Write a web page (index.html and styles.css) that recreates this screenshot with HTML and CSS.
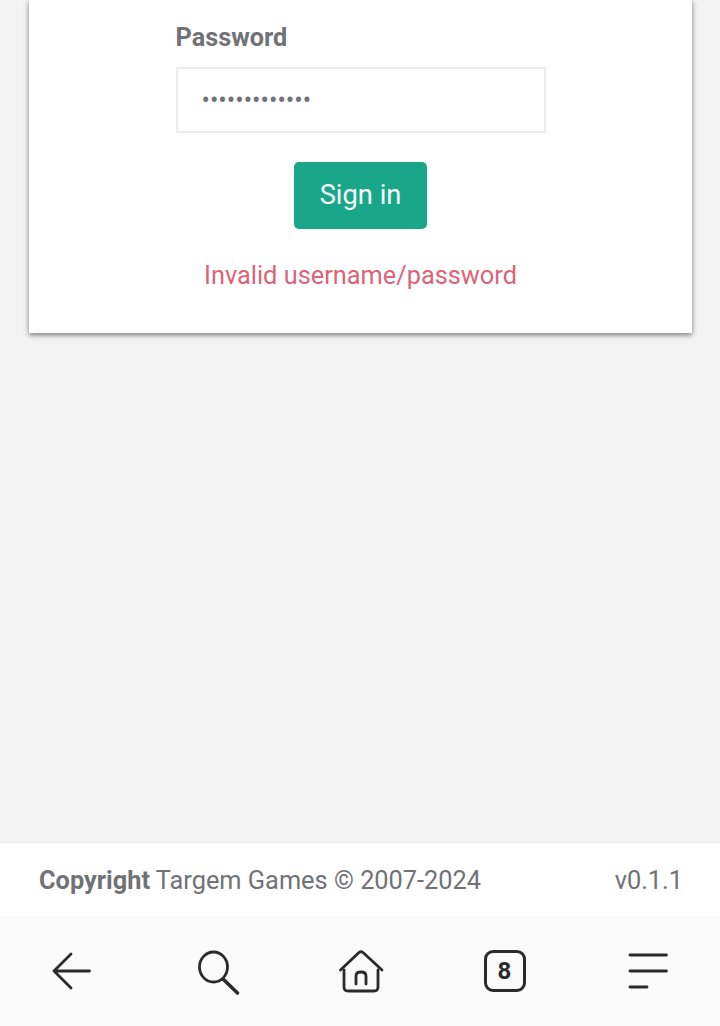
FILE: index.html
```html
<!DOCTYPE html>
<html lang="en">

<head>
    <meta charset="UTF-8">
    <meta name="viewport" content="width=device-width, initial-scale=1.0">
    <title>Sign in</title>
    <link rel="stylesheet" href="styles.css">
</head>

<body>
    <main class="content">
        <div class="card">
            <form class="login-form">
                <label class="field-label" for="password">Password</label>
                <input class="field-input" type="password" id="password" value="targemgames1!">
                <button class="sign-in" type="button">Sign in</button>
                <p class="error">Invalid username/password</p>
            </form>
        </div>
    </main>

    <footer class="footer">
        <span><strong>Copyright</strong> Targem Games © 2007-2024</span>
        <span>v0.1.1</span>
    </footer>

    <nav class="browser-bar">
        <svg class="icon" width="44" height="44" viewBox="0 0 44 44" aria-label="Back">
            <path d="M4 22H39.500M21 5L4 22L21 39" />
        </svg>
        <svg class="icon" width="44" height="44" viewBox="0 0 44 44" aria-label="Search">
            <ellipse cx="18.500" cy="18" rx="14" ry="15" />
            <path class="handle" d="M28 30L42.500 44" />
        </svg>
        <svg class="icon" width="44" height="44" viewBox="0 0 44 44" aria-label="Home">
            <path d="M1.500 21L20 3.500Q22 2 24 3.500L43 21" />
            <path d="M5 21V38Q5 42 9 42H35Q39 42 39 38V21" />
            <path d="M17 35V27Q17 23 22 23Q27 23 27 27V35" />
        </svg>
        <div class="tabs-count">8</div>
        <svg class="icon" width="44" height="44" viewBox="0 0 44 44" aria-label="Menu">
            <path d="M4 6H40.500M4 22H40.500M4 38H21" />
        </svg>
    </nav>
</body>

</html>
```

FILE: styles.css
```css
* {
    box-sizing: border-box;
}

html,
body {
    height: 100%;
}

body {
    font-family: Roboto, 'Liberation Sans', sans-serif;
    background: #f3f3f3;
    color: #707275;
    display: flex;
    flex-direction: column;
    margin: 0;
    overflow: hidden;
}

.content {
    flex: 1;
    padding: 0 28px 0 29px;
}

.card {
    background: white;
    height: 333px;
    padding-top: 23px;
    box-shadow: 0 2px 5px rgba(0, 0, 0, 0.5);
}

.login-form {
    width: 370px;
    margin: 0 auto;
    display: flex;
    flex-direction: column;
    align-items: center;
}

.field-label {
    align-self: flex-start;
    font-size: 25.300px;
    font-weight: 700;
    line-height: 30px;
    margin-bottom: 14px;
}

.field-input {
    width: 100%;
    height: 66px;
    padding: 0 24px;
    border: 2px solid #ececec;
    background: white;
    color: #707275;
    font-family: inherit;
    font-size: 25px;
    outline: none;
}

.sign-in {
    width: 133px;
    height: 67px;
    margin-top: 29px;
    padding-bottom: 3px;
    background: #19a689;
    color: #f4fbf9;
    border: none;
    border-radius: 5px;
    font-family: inherit;
    font-size: 27.300px;
}

.error {
    margin: 30px 0 0;
    color: #da6478;
    font-size: 25.350px;
    line-height: 32px;
    white-space: nowrap;
}

.footer {
    height: 74px;
    padding: 1px 37px 0 39px;
    background: white;
    border-top: 1px solid #e9e9e9;
    display: flex;
    justify-content: space-between;
    align-items: center;
    font-size: 25.350px;
}

.browser-bar {
    height: 110px;
    padding: 13px 50px 0 50px;
    background: #fafafa;
    display: flex;
    justify-content: space-between;
    align-items: flex-start;
    color: #2a2a2a;
}

.icon {
    margin-top: 20px;
    overflow: visible;
    fill: none;
    stroke: #2a2a2a;
    stroke-width: 2.800;
    stroke-linecap: round;
    stroke-linejoin: round;
}

.icon .handle {
    stroke-width: 3.600;
}

.tabs-count {
    width: 42px;
    height: 42px;
    margin-top: 21px;
    border: 3px solid #2a2a2a;
    border-radius: 9px;
    display: flex;
    justify-content: center;
    align-items: center;
    font-size: 24px;
    font-weight: 700;
}
```
